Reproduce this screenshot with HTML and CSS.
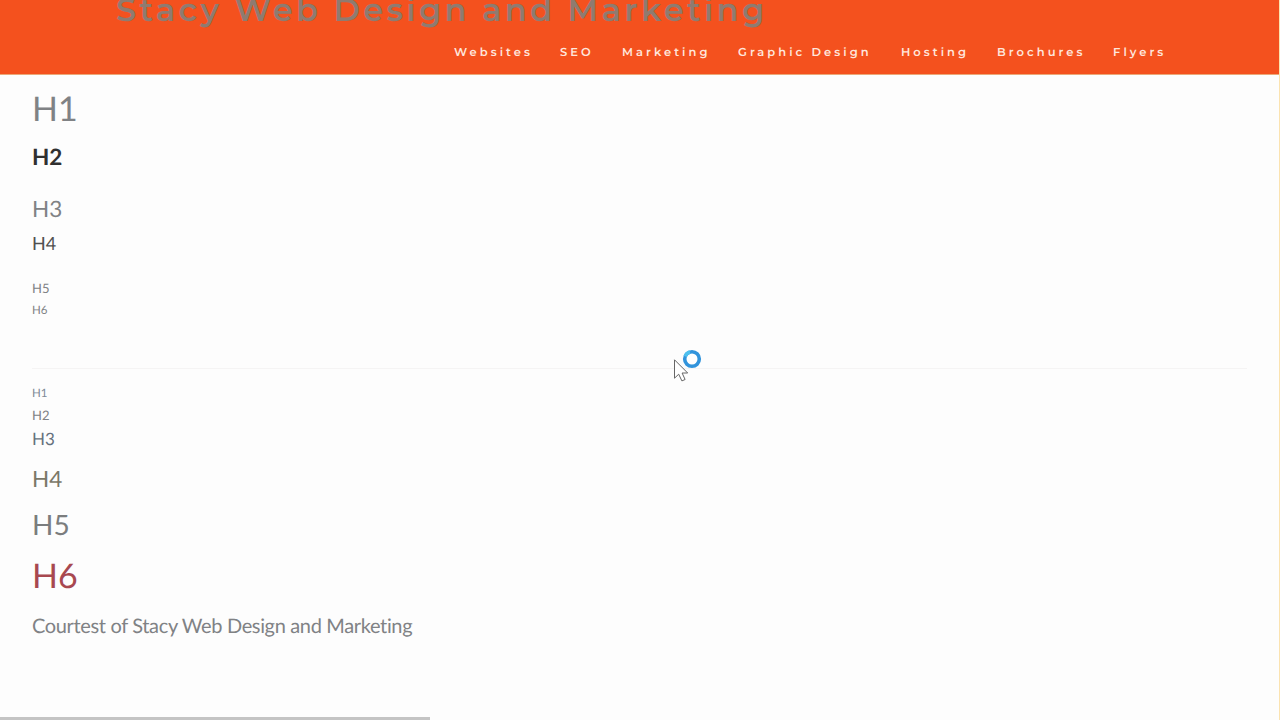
FILE: index.html
```html
<!DOCTYPE html>
<html lang="en">
<head>
    <meta charset="UTF-8">
    <meta name="viewport" content="width=device-width, initial-scale=1.0">
    <title>Stacy Web Design and Marketing</title>
    <link rel="stylesheet" href="styles.css">
</head>
<body>
    <header class="header">
        <div class="site-title">Stacy Web Design and Marketing</div>
        <nav class="menu">
            <a href="#">Websites</a>
            <a href="#">SEO</a>
            <a href="#">Marketing</a>
            <a href="#">Graphic Design</a>
            <a href="#">Hosting</a>
            <a href="#">Brochures</a>
            <a href="#">Flyers</a>
        </nav>
    </header>

    <main class="content">
        <section class="default-sizes">
            <h1>H1</h1>
            <h2>H2</h2>
            <h3>H3</h3>
            <h4>H4</h4>
            <h5>H5</h5>
            <h6>H6</h6>
        </section>
        <hr>
        <section class="reversed-sizes">
            <h1>H1</h1>
            <h2>H2</h2>
            <h3>H3</h3>
            <h4>H4</h4>
            <h5>H5</h5>
            <h6>H6</h6>
        </section>
        <p class="credit">Courtest of Stacy Web Design and Marketing</p>
    </main>

    <div class="status-bar"></div>
    <svg class="cursor" width="32" height="36" viewBox="0 0 32 36">
        <circle cx="20" cy="11" r="7.3" fill="#fff" stroke="#3294dc" stroke-width="3.6"/>
        <path d="M13.2 8.4A7.3 7.3 0 0 1 18 4" fill="none" stroke="#4fc0ee" stroke-width="3.6"/>
        <path d="M2.5 11.8v18.4l4.2-4 3.2 6.7 3.2-1.4-3-6.5h5.6z" fill="#fff" stroke="#666" stroke-width="1"/>
    </svg>
</body>
</html>
```

FILE: styles.css
```css
body {
    margin: 0;
    height: 720px;
    box-sizing: border-box;
    overflow: hidden;
    border-right: 1px solid #fbe3b0;
    background: #fdfdfd;
    color: #808285;
    font-family: Lato, sans-serif;
    text-rendering: geometricPrecision;
}
.header {
    height: 75px;
    box-sizing: border-box;
    overflow: hidden;
    background: #f4511e;
    border-bottom: 1px solid #eba878;
    font-family: Montserrat, Inter, sans-serif;
}
.site-title {
    margin: -10px 0 0 116px;
    font-size: 32px;
    font-weight: 600;
    line-height: 42px;
    letter-spacing: 3.35px;
    white-space: nowrap;
    color: #8f7b70;
}
.menu {
    display: grid;
    grid-template-columns: 106px 62px 116px 163px 96px 116px 60px;
    margin: 12px 0 0 454px;
}
.menu a {
    color: #ffe6dc;
    font-size: 11.5px;
    font-weight: 600;
    line-height: 16px;
    letter-spacing: 3.05px;
    white-space: nowrap;
    text-decoration: none;
}
.content {
    padding: 13px 32px 0;
}
h1, h2, h3, h4, h5, h6 {
    margin: 0;
    font-weight: 400;
}
.default-sizes h1 {
    font-size: 34px;
    line-height: 42px;
    margin-bottom: 13px;
}
.default-sizes h2 {
    font-size: 22.5px;
    font-weight: 700;
    line-height: 28px;
    margin-bottom: 24px;
    color: #303030;
}
.default-sizes h3 {
    font-size: 22.5px;
    line-height: 28px;
    margin-bottom: 9px;
}
.default-sizes h4 {
    font-size: 18px;
    line-height: 22px;
    margin-bottom: 26px;
    color: #505050;
}
.default-sizes h5 {
    font-size: 13px;
    line-height: 16px;
    margin-bottom: 8px;
}
.default-sizes h6 {
    font-size: 11.5px;
    line-height: 14px;
}
hr {
    margin: 50px 0 18px;
    border: 0;
    border-top: 1px solid #f5f4f4;
}
.reversed-sizes h1 {
    font-size: 11.5px;
    line-height: 14px;
    margin-bottom: 6px;
    color: #7d8a96;
}
.reversed-sizes h2 {
    font-size: 13px;
    line-height: 16px;
    margin-bottom: 5px;
}
.reversed-sizes h3 {
    font-size: 17px;
    line-height: 22px;
    margin-bottom: 15px;
    color: #66727e;
}
.reversed-sizes h4 {
    font-size: 22.5px;
    line-height: 28px;
    margin-bottom: 13px;
    color: #7b7868;
}
.reversed-sizes h5 {
    font-size: 28px;
    line-height: 36px;
    margin-bottom: 13px;
    color: #7b7d7e;
}
.reversed-sizes h6 {
    font-size: 34px;
    line-height: 42px;
    color: #a84850;
}
.credit {
    margin: 16px 0 0;
    font-size: 20px;
    line-height: 26px;
    letter-spacing: -0.35px;
}
/* browser status strip peeking in at the bottom */
.status-bar {
    position: absolute;
    left: 0;
    bottom: 0;
    width: 430px;
    height: 3px;
    background: #c4c4c4;
}
.cursor {
    position: absolute;
    left: 672px;
    top: 348px;
}
```
